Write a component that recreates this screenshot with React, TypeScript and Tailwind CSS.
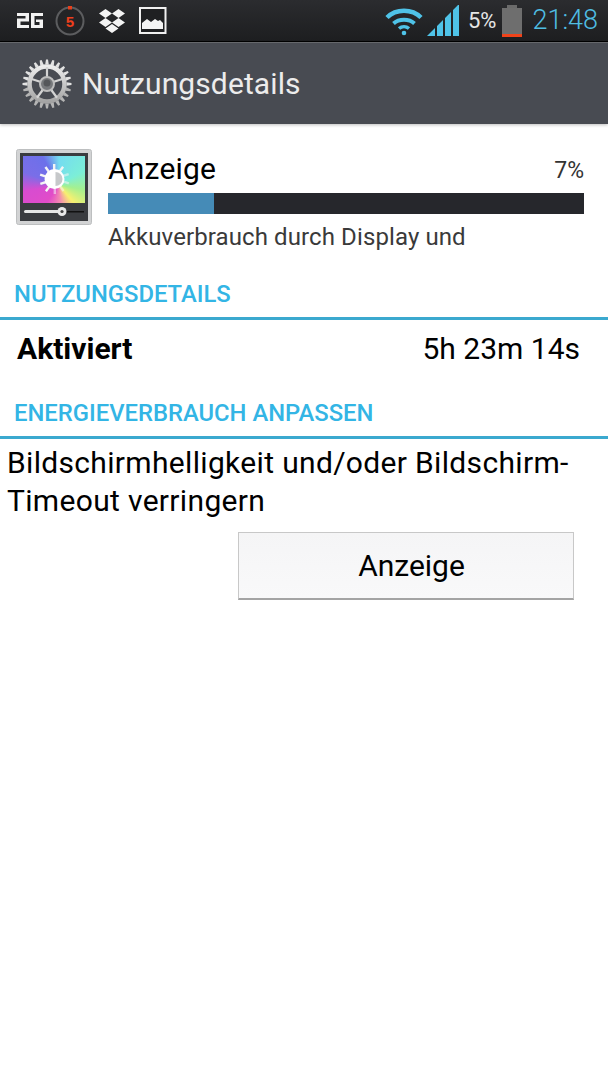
import React from "react";

function Gear() {
  const teeth = Array.from({ length: 24 }, (_, i) => (i * 360) / 24);
  return (
    <svg width="52" height="52" viewBox="0 0 52 52">
      <defs>
        <linearGradient id="g" x1="0" y1="0" x2="0" y2="1">
          <stop offset="0" stopColor="#ececec" />
          <stop offset="1" stopColor="#a4a4a4" />
        </linearGradient>
      </defs>
      {teeth.map((a) => (
        <polygon key={a} points="24.2,6.500 25,1.500 27,1.500 27.800,6.500" fill={a > 90 && a < 270 ? "#b4b4b4" : "#e2e2e2"} transform={`rotate(${a} 26 26)`} />
      ))}
      <circle cx="26" cy="26" r="17.5" fill="none" stroke="url(#g)" strokeWidth="4.5" />
      {[0, 72, 144, 216, 288].map((a) => (
        <rect key={a} x="24.900" y="9" width="2.200" height="17" fill="#d4d4d4" transform={`rotate(${a} 26 26)`} />
      ))}
      <circle cx="26" cy="26" r="7" fill="#77797c" stroke="#bdbdbd" strokeWidth="2" />
      <circle cx="26" cy="25" r="3.500" fill="#55575a" />
    </svg>
  );
}

function DisplayIcon() {
  const rays = Array.from({ length: 10 }, (_, i) => i * 36);
  return (
    <svg width="76" height="76" viewBox="0 0 76 76">
      <rect x="0.5" y="0.5" width="75" height="75" rx="2" fill="#d2d3d4" stroke="#bdbfc0" />
      <rect x="4" y="4" width="68" height="68" fill="#3a3c40" />
      <foreignObject x="7" y="7" width="62" height="47">
        <div className="h-full w-full bg-[conic-gradient(from_0deg_at_58%_62%,#74dcf0_0deg,#7ceed8_60deg,#a4f090_100deg,#f8f070_140deg,#f48cb0_175deg,#e24cc8_215deg,#d84cd0_260deg,#7a6ee8_290deg,#6c70ea_330deg,#74dcf0_360deg)]" />
      </foreignObject>
      {rays.map((a) => (
        <rect key={a} x="37" y="15" width="2.4" height="7" fill="#f4f4f4" opacity={a > 60 && a < 200 ? 0.55 : 1} transform={`rotate(${a} 38.5 30)`} />
      ))}
      <circle cx="38.5" cy="30" r="10" fill="#fff" />
      <path d="M39.500 23a7 7 0 0 1 0 14z" fill="#c6c8ca" />
      <rect x="8" y="61" width="38" height="3" rx="1.5" fill="#e6e6e6" />
      <rect x="46" y="62" width="22" height="1.5" fill="#111" />
      <circle cx="46" cy="62.5" r="4.5" fill="#e8e8e8" />
      <circle cx="46" cy="62.5" r="1.6" fill="#444" />
    </svg>
  );
}

function StatusBar() {
  return (
    <div className="flex h-[41px] items-center justify-between bg-gradient-to-b from-[#2b2c2f] to-[#1d1e20] pl-[17px] pr-[10px]">
      <div className="flex items-center">
        <svg width="26" height="15" viewBox="0 0 26 15">
          <path d="M0 0h12v8.500H3.500V12H12v3H0V5.500h8.500V3H0zM14 0h12v3H17.500v9H22.500V9H19V6.500h7V15H14z" fill="#f2f2f2" />
        </svg>
        <svg width="32" height="32" viewBox="0 0 32 32" className="ml-[12px]">
          <circle cx="15" cy="16" r="13.500" fill="#232426" stroke="#5c5d5f" strokeWidth="2" />
          <rect x="13" y="1" width="4" height="3.500" fill="#e8401c" />
          <text x="15" y="21.500" textAnchor="middle" fontSize="15" fontFamily="Liberation Mono, monospace" fontWeight="700" fill="#ee3f1c">5</text>
        </svg>
        <svg width="28" height="26" viewBox="0 0 28 26" className="ml-[11px]">
          <path d="M7.500 1 14 5.500 7.500 10 1 5.500zM20.500 1 27 5.500 20.500 10 14 5.500zM7.500 10 14 14.500 7.500 19 1 14.500zM20.500 10 27 14.500 20.500 19 14 14.500zM14 16l6.500 4.500L14 25l-6.500-4.500z" fill="#f4f4f4" />
        </svg>
        <svg width="28" height="27" viewBox="0 0 28 27" className="ml-[13px]">
          <rect x="1" y="1" width="25.500" height="25" fill="#1f2022" stroke="#f0f0f0" strokeWidth="2" />
          <path d="M3 22v-6l5-4 4 3 4-3 3 2 2-1 3 3v6z" fill="#f4f4f4" />
        </svg>
      </div>
      <div className="flex items-center">
        <svg width="38" height="30" viewBox="0 0 38 30">
          <path d="M2 11.500C11 2.500 27 2.500 36 11.500" fill="none" stroke="#4fc3e8" strokeWidth="4.500" />
          <path d="M8.500 17.500C14 12.500 24 12.500 29.500 17.500" fill="none" stroke="#4fc3e8" strokeWidth="4" />
          <path d="M14 22.500C17 20 21 20 24 22.500" fill="none" stroke="#4fc3e8" strokeWidth="3.500" />
          <circle cx="19" cy="27" r="2.300" fill="#4fc3e8" />
        </svg>
        <svg width="34" height="32" viewBox="0 0 34 32" className="ml-[3px]">
          <path d="M1 31 9 23v8zM11 21l6-6v16h-6zM19 13l6-6v24h-6zM27 5l6-6v32h-6z" fill="#4fc3e8" />
        </svg>
        <span className="ml-[8px] font-['Roboto',sans-serif] text-[22px] leading-none text-[#e6e6e6]">5%</span>
        <svg width="20" height="32" viewBox="0 0 20 32" className="ml-[6px]">
          <rect x="5" y="0" width="10" height="4" fill="#6a6a6a" />
          <rect x="0" y="3" width="20" height="26" fill="#6e6e6e" />
          <rect x="0" y="29" width="20" height="3" fill="#f0431a" />
        </svg>
        <span className="ml-[10px] font-['Roboto',sans-serif] text-[27px] font-light leading-none text-[#4fbde2]">21:48</span>
      </div>
    </div>
  );
}

function SectionHeader({ children, className }: { children: React.ReactNode; className: string }) {
  return (
    <div className={className}>
      <div className="pl-[14px] text-[23.8px] font-medium leading-[28px] text-[#33b5e5]">{children}</div>
      <div className="mt-[9px] h-[3px] bg-[#3ba9cf]" />
    </div>
  );
}

export default function App() {
  return (
    <div className="h-[1080px] w-[608px] overflow-hidden bg-white font-['Roboto',sans-serif] text-black">
      <StatusBar />
      <div className="h-px bg-black" />
      <div className="flex h-[82px] items-center border-t border-[#66686c] bg-[#484b52] pl-[21px] shadow-[0_1px_3px_rgba(0,0,0,0.25)]">
        <Gear />
        <span className="ml-[9px] text-[30px] leading-none tracking-[0.1px] text-[#ececec]">Nutzungsdetails</span>
      </div>

      <div className="flex pl-[16px] pr-[24px] pt-[25px]">
        <DisplayIcon />
        <div className="ml-[16px] flex-1">
          <div className="flex h-[39px] items-center justify-between">
            <span className="text-[30px] leading-none tracking-[0.2px]">Anzeige</span>
            <span className="pt-[4px] text-[23px] leading-none text-[#333]">7%</span>
          </div>
          <div className="mt-[5px] h-[21px] bg-[#26272c]">
            <div className="h-full bg-[#458bb7]" style={{ width: "22.3%" }} />
          </div>
          <div className="mt-[9px] text-[24px] leading-[28px] tracking-[0.1px] text-[#3a3a3a]">Akkuverbrauch durch Display und</div>
        </div>
      </div>

      <SectionHeader className="mt-[29px]">NUTZUNGSDETAILS</SectionHeader>

      <div className="flex h-[58px] items-center justify-between pl-[17px] pr-[28px]">
        <span className="text-[30px] font-bold leading-none">Aktiviert</span>
        <span className="text-[30px] leading-none">5h 23m 14s</span>
      </div>

      <SectionHeader className="mt-[21px]">ENERGIEVERBRAUCH ANPASSEN</SectionHeader>

      <div className="mt-[5px] pl-[7px] text-[30px] leading-[38px] tracking-[0.33px]">
        Bildschirmhelligkeit und/oder Bildschirm-
        <br />
        Timeout verringern
      </div>

      <div className="ml-[238px] mt-[12px] flex h-[68px] w-[336px] items-center justify-center border border-b-2 border-[#c8c8c8] border-b-[#a4a4a4] bg-gradient-to-b from-[#f5f5f6] to-[#f9f9fa] pl-[11px] text-[30px] leading-none">
        Anzeige
      </div>
    </div>
  );
}
